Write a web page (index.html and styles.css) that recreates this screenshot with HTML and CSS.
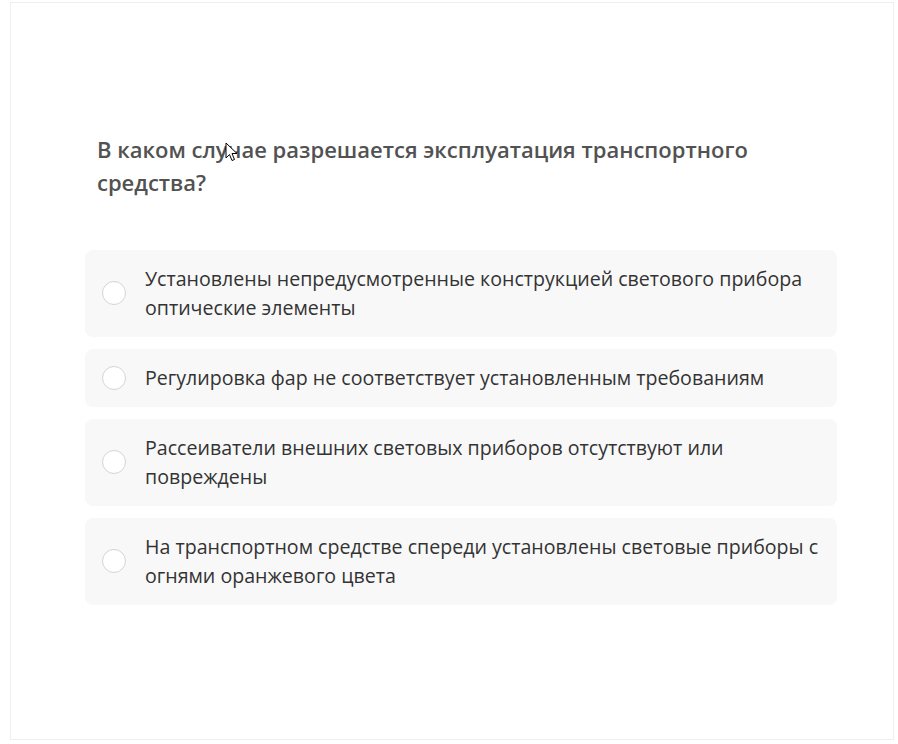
FILE: index.html
```html
<!DOCTYPE html>
<html lang="ru">
    <head>
        <meta charset="UTF-8" />
        <title>Билет</title>
        <link rel="stylesheet" href="styles.css">
    </head>
    <body>
        <div class="card">
            <div class="question">
                В каком случае разрешается эксплуатация транспортного средства?
                <svg class="cursor" width="14" height="20" viewBox="0 0 14 20">
                    <path d="M1 1 L1 16 L4.5 12.5 L7 18.5 L9.5 17.5 L7 11.5 L12 11.5 Z" fill="#fff" stroke="#000" stroke-width="1" stroke-linejoin="round" />
                </svg>
            </div>
            <div class="answers">
                <label class="answer">
                    <span class="radio"></span>
                    <span class="answer-text">Установлены непредусмотренные конструкцией светового прибора оптические элементы</span>
                </label>
                <label class="answer">
                    <span class="radio"></span>
                    <span class="answer-text">Регулировка фар не соответствует установленным требованиям</span>
                </label>
                <label class="answer">
                    <span class="radio"></span>
                    <span class="answer-text">Рассеиватели внешних световых приборов отсутствуют или повреждены</span>
                </label>
                <label class="answer">
                    <span class="radio"></span>
                    <span class="answer-text">На транспортном средстве спереди установлены световые приборы с огнями оранжевого цвета</span>
                </label>
            </div>
        </div>
    </body>
</html>
```

FILE: styles.css
```css
html {
    background-color: #fff;
}

body {
    margin: 0;
    font-family: "Open Sans", "Liberation Sans", sans-serif;
    color: #333;
}

.card {
    box-sizing: border-box;
    margin: 2px 4px 0 10px;
    height: 738px;
    border: 1px solid #efefef;
    padding: 130px 56px 0 74px;
}

.question {
    position: relative;
    margin: 0 40px 51px 12px;
    font-size: 22px;
    font-weight: 600;
    line-height: 33px;
    color: #525252;
}

.cursor {
    position: absolute;
    left: 128px;
    top: 9px;
}

.answers {
    display: flex;
    flex-direction: column;
    gap: 12px;
}

.answer {
    display: flex;
    align-items: center;
    gap: 19px;
    padding: 14px 15px 15px 17px;
    background-color: #f8f8f8;
    border-radius: 8px;
}

.radio {
    flex: none;
    width: 22px;
    height: 22px;
    border: 1px solid #d4d4d4;
    border-radius: 50%;
    background-color: #fff;
}

.answer-text {
    font-size: 19.6px;
    line-height: 29px;
}
```
